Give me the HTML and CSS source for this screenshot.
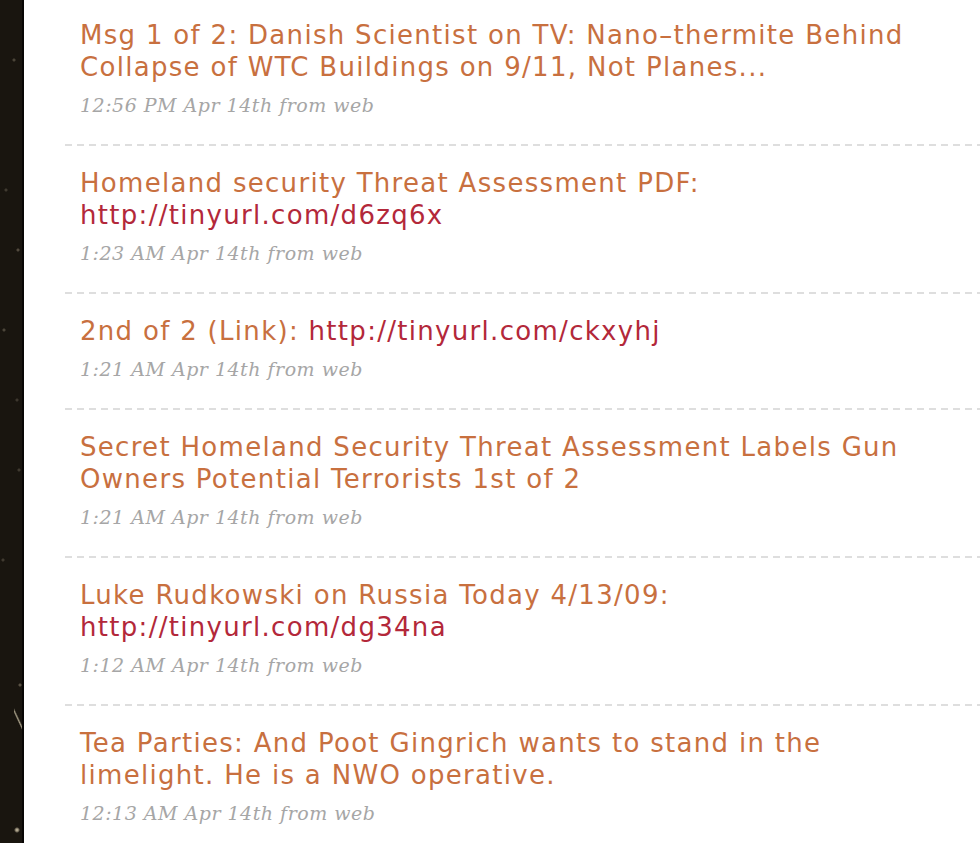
FILE: index.html
```html
<!DOCTYPE html>
<html>
<head>
<meta charset="utf-8">
<link rel="stylesheet" href="styles.css">
</head>
<body>
<div class="page">
  <div class="backdrop"></div>
  <main class="timeline">
    <ol class="tweets">
      <li class="tweet">
        <p class="text">Msg 1 of 2: Danish Scientist on TV: Nano–thermite Behind Collapse of WTC Buildings on 9/11, Not Planes...</p>
        <p class="meta">12:56 PM Apr 14th from web</p>
      </li>
      <li class="tweet">
        <p class="text">Homeland security Threat Assessment PDF: <a class="link" href="#">http://tinyurl.com/d6zq6x</a></p>
        <p class="meta">1:23 AM Apr 14th from web</p>
      </li>
      <li class="tweet">
        <p class="text">2nd of 2 (Link): <a class="link" href="#">http://tinyurl.com/ckxyhj</a></p>
        <p class="meta">1:21 AM Apr 14th from web</p>
      </li>
      <li class="tweet">
        <p class="text">Secret Homeland Security Threat Assessment Labels Gun Owners Potential Terrorists 1st of 2</p>
        <p class="meta">1:21 AM Apr 14th from web</p>
      </li>
      <li class="tweet">
        <p class="text">Luke Rudkowski on Russia Today 4/13/09: <a class="link" href="#">http://tinyurl.com/dg34na</a></p>
        <p class="meta">1:12 AM Apr 14th from web</p>
      </li>
      <li class="tweet">
        <p class="text">Tea Parties: And Poot Gingrich wants to stand in the limelight. He is a NWO operative.</p>
        <p class="meta">12:13 AM Apr 14th from web</p>
      </li>
    </ol>
  </main>
</div>
</body>
</html>
```
FILE: styles.css
```css
html, body {
  margin: 0;
  padding: 0;
  background: #fff;
}
.page {
  display: flex;
  min-height: 843px;
  overflow: hidden;
}
.backdrop {
  flex: 0 0 22px;
  border-right: 2px solid #080604;
  background-color: #19150f;
  background-image:
    radial-gradient(circle at 14px 60px, #4a4438 0 1px, transparent 2px),
    radial-gradient(circle at 6px 190px, #403a30 0 1px, transparent 2px),
    radial-gradient(circle at 18px 250px, #524a3e 0 1px, transparent 2px),
    radial-gradient(circle at 4px 330px, #4b4539 0 1px, transparent 2px),
    radial-gradient(circle at 17px 400px, #3d372e 0 1px, transparent 2px),
    radial-gradient(circle at 19px 470px, #403a30 0 1px, transparent 2px),
    radial-gradient(circle at 3px 560px, #403a30 0 1px, transparent 2px),
    radial-gradient(circle at 20px 685px, #5a5244 0 1px, transparent 2px),
    radial-gradient(circle at 17px 830px, #b0a68e 0 1px, transparent 3px),
    linear-gradient(65deg, transparent 0 44%, rgba(225,215,185,0.7) 48%, transparent 53%);
  background-size: auto, auto, auto, auto, auto, auto, auto, auto, auto, 10px 50px;
  background-repeat: no-repeat;
  background-position: 0 0, 0 0, 0 0, 0 0, 0 0, 0 0, 0 0, 0 0, 0 0, 14px 695px;
}
.timeline {
  flex: 1;
  padding-left: 41px;
}
.tweets {
  list-style: none;
  margin: 0;
  padding: 0;
}
.tweet {
  padding: 21px 0 27px 15px;
  border-bottom: 2px solid transparent;
  border-image: repeating-linear-gradient(90deg, #dedede 0 7px, transparent 7px 12px) 0 0 2 0 / 0 0 2px 0 repeat;
}
.tweet:first-child {
  padding-top: 19px;
}
.tweet:last-child {
  border-bottom: 0;
  border-image: none;
}
.text {
  margin: 0;
  width: 860px;
  font-family: "DejaVu Sans", "Liberation Sans", sans-serif;
  font-size: 26px;
  letter-spacing: 1.3px;
  line-height: 32px;
  color: #c8703f;
}
.link {
  color: #b3283a;
  text-decoration: none;
}
.meta {
  margin: 10px 0 0;
  font-family: "DejaVu Serif", "Liberation Serif", serif;
  font-style: italic;
  font-size: 19px;
  letter-spacing: 0.5px;
  line-height: 24px;
  color: #a6a6a6;
}
```
